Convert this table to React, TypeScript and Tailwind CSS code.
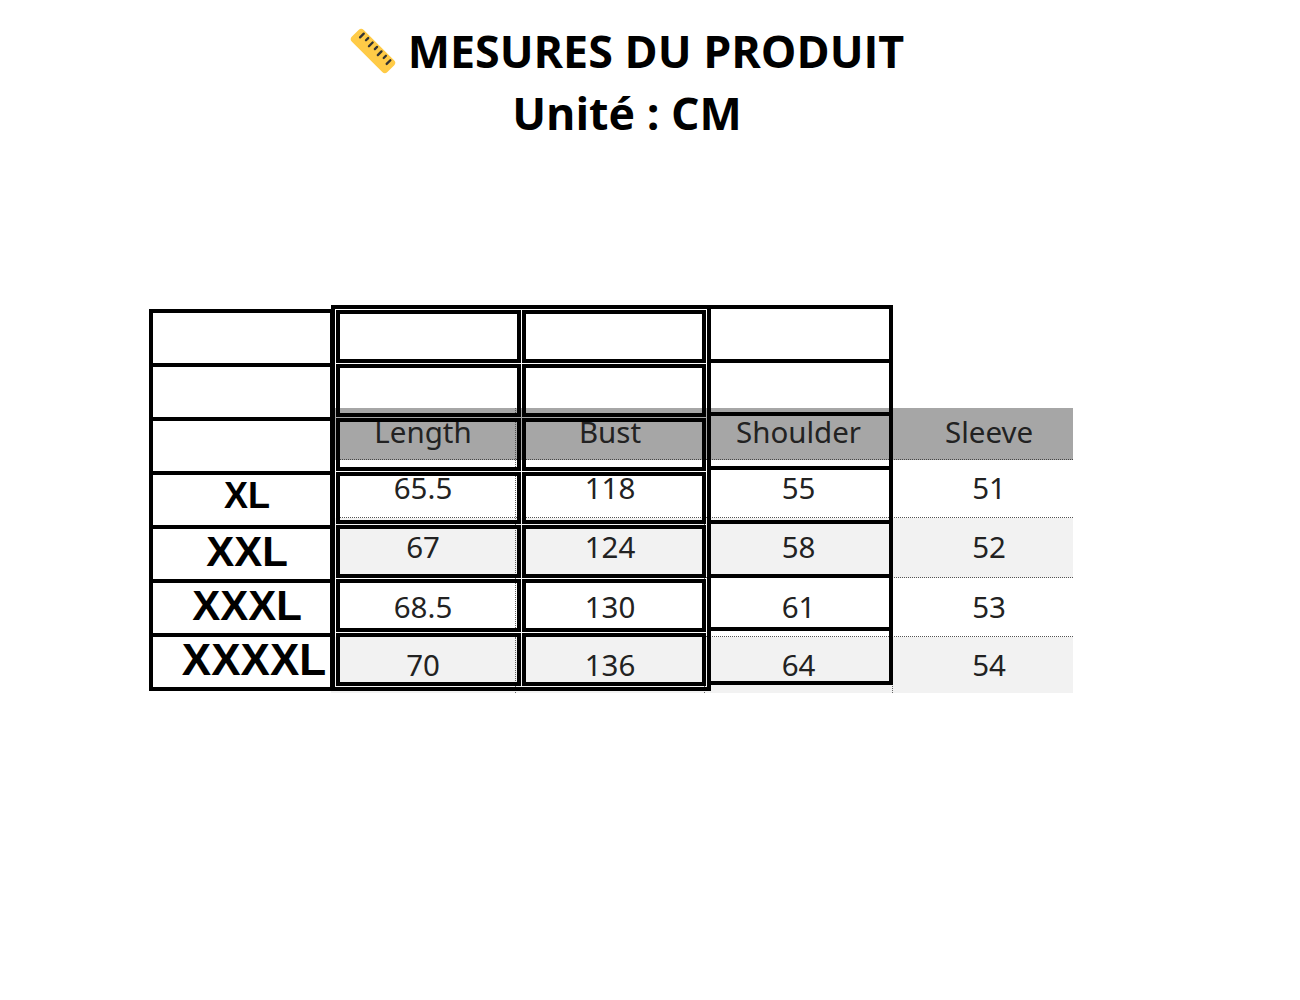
import React from "react";

const headers = ["Length", "Bust", "Shoulder", "Sleeve"];
const rows = [
  ["65.5", "118", "55", "51"],
  ["67", "124", "58", "52"],
  ["68.5", "130", "61", "53"],
  ["70", "136", "64", "54"],
];

function Ruler() {
  return (
    <svg width="46" height="46" viewBox="0 0 44 44" aria-hidden="true">
      <g transform="rotate(45 22 22)">
        <rect x="-2" y="14" width="48" height="16" rx="3.5" fill="#FFCB47" />
        {[4, 10, 16, 22, 28, 34, 40].map((x, i) => (
          <line
            key={x}
            x1={x}
            y1={16.5}
            x2={x}
            y2={i % 2 === 0 ? 21.5 : 19.5}
            stroke="#333"
            strokeWidth="2.2"
            strokeLinecap="round"
          />
        ))}
      </g>
    </svg>
  );
}

function Sheet() {
  const rowBg = ["bg-white", "bg-[#f2f2f2]", "bg-white", "bg-[#f2f2f2]"];
  const rowH = ["h-[58px]", "h-[60px]", "h-[59px]", "h-[56px]"];
  return (
    <div
      className="ml-[182px] w-[742px] flex flex-col text-[29.5px] text-[#222]"
      style={{ fontFamily: '"Noto Sans", "Open Sans", sans-serif' }}
    >
      <div className="grid grid-cols-[185px_189px_188px_180px] h-[52px] bg-[#a6a6a6] border-b border-dotted border-[#444]">
        {headers.map((h, i) => (
          <div
            key={h}
            className={`flex items-center justify-center pb-[3px] ${i < 3 ? "border-r border-dotted border-[#555]" : "pl-[12px]"}`}
          >
            {h}
          </div>
        ))}
      </div>
      {rows.map((r, ri) => (
        <div
          key={ri}
          className={`grid grid-cols-[185px_189px_188px_180px] ${rowH[ri]} ${rowBg[ri]} ${ri < 3 ? "border-b border-dotted border-[#555]" : ""}`}
        >
          {r.map((v, ci) => (
            <div
              key={ci}
              className={`flex items-center justify-center ${ci < 3 ? "border-r border-dotted border-[#666]" : "pl-[12px]"}`}
            >
              {v}
            </div>
          ))}
        </div>
      ))}
    </div>
  );
}

function SizeTable() {
  const labels: { t: string; cls: string }[] = [
    { t: "", cls: "" },
    { t: "", cls: "" },
    { t: "", cls: "" },
    { t: "XL", cls: "text-[36px] pl-[11px] pb-[8px]" },
    { t: "XXL", cls: "text-[42px] pl-[11px] pb-[4px]" },
    { t: "XXXL", cls: "text-[42px] pl-[11px] pb-[4px]" },
    { t: "XXXXL", cls: "text-[44px] pl-[25px] pb-[4px]" },
  ];
  return (
    <div
      className="absolute left-0 top-[4px] w-[185px] h-[382px] border-4 border-black bg-white flex flex-col font-bold text-black"
      style={{ fontFamily: '"Liberation Sans", Arial, sans-serif' }}
    >
      {labels.map((l, i) => (
        <div
          key={i}
          className={`flex items-center justify-center leading-none ${i < 6 ? "h-[54px] border-b-4 border-black" : "h-[50px]"} ${l.cls}`}
        >
          {l.t}
        </div>
      ))}
    </div>
  );
}

function DoubleTable() {
  return (
    <div className="absolute left-[182px] top-0 w-[380px] h-[386px] border-4 border-black">
      <div className="grid grid-cols-2 grid-rows-7 gap-px p-px h-full">
        {Array.from({ length: 14 }).map((_, i) => (
          <div key={i} className="border-4 border-black" />
        ))}
      </div>
    </div>
  );
}

function ShoulderTable() {
  return (
    <div className="absolute left-[558px] top-0 w-[186px] h-[380px] border-4 border-black flex flex-col">
      {Array.from({ length: 7 }).map((_, i) => (
        <div key={i} className={`flex-1 ${i < 6 ? "border-b-4 border-black" : ""}`} />
      ))}
    </div>
  );
}

export default function App() {
  return (
    <div className="w-[1300px] h-[1000px] bg-white overflow-hidden">
      <div
        className="pr-[46px] pt-[20px] text-center font-bold text-black text-[44.8px] leading-[62px]"
        style={{ fontFamily: '"Open Sans", "Noto Sans", sans-serif' }}
      >
        <div className="flex items-center justify-center gap-[12px] h-[62px]">
          <Ruler />
          <span>MESURES DU PRODUIT</span>
        </div>
        <div className="h-[62px]">Unité : CM</div>
      </div>
      <div className="relative ml-[149px] mt-[161px] pt-[103px] w-[925px] h-[389px]">
        <Sheet />
        <SizeTable />
        <DoubleTable />
        <ShoulderTable />
      </div>
    </div>
  );
}
